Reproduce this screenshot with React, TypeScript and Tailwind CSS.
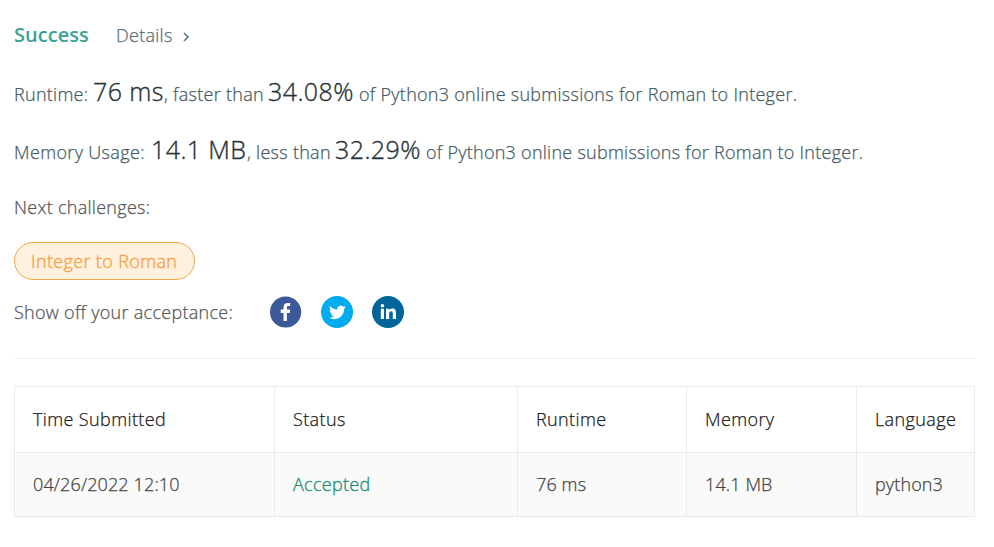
import React from "react";

const columns = [
  { title: "Time Submitted", value: "04/26/2022 12:10" },
  { title: "Status", value: "Accepted" },
  { title: "Runtime", value: "76 ms" },
  { title: "Memory", value: "14.1 MB" },
  { title: "Language", value: "python3" },
];

const grid = "grid grid-cols-[260px_243px_169px_170px_118px]";

const figure = "text-[25px] tracking-[0.42px] text-[#263238] [-webkit-text-stroke:0.35px]";

function Facebook() {
  return (
    <svg className="size-8" viewBox="0 0 32 32">
      <circle cx="15.6" cy="16" r="15.6" fill="#3b5998" />
      <path
        fill="#fff"
        d="M16.9 25v-8.1h2.8l.4-3.3h-3.2v-2c0-.9.3-1.5 1.6-1.5h1.7v-3c-.3 0-1.3-.1-2.5-.1-2.5 0-4.2 1.5-4.2 4.3v2.3h-2.8v3.3h2.8V25z"
      />
    </svg>
  );
}

function Twitter() {
  return (
    <svg className="size-8" viewBox="0 0 32 32">
      <circle cx="16" cy="16" r="16" fill="#00aced" />
      <path
        fill="#fff"
        transform="translate(8 7.9) scale(.7)"
        d="M23.953 4.57a10 10 0 01-2.825.775 4.958 4.958 0 002.163-2.723c-.951.555-2.005.959-3.127 1.184a4.92 4.92 0 00-8.384 4.482C7.69 8.095 4.067 6.13 1.64 3.162a4.822 4.822 0 00-.666 2.475c0 1.71.87 3.213 2.188 4.096a4.904 4.904 0 01-2.228-.616v.06a4.923 4.923 0 003.946 4.827 4.996 4.996 0 01-2.212.085 4.936 4.936 0 004.604 3.417 9.867 9.867 0 01-6.102 2.105c-.39 0-.779-.023-1.17-.067a13.995 13.995 0 007.557 2.209c9.053 0 13.998-7.496 13.998-13.985 0-.21 0-.42-.015-.63A9.935 9.935 0 0024 4.59z"
      />
    </svg>
  );
}

function LinkedIn() {
  return (
    <svg className="size-8" viewBox="0 0 32 32">
      <circle cx="16" cy="16" r="16" fill="#006699" />
      <g fill="#fff">
        <circle cx="10.4" cy="9.7" r="1.8" />
        <path d="M8.8 12.8h3.2V23H8.8zM14 12.8h3v1.4c.5-.9 1.6-1.7 3.2-1.7 3.2 0 3.8 2.1 3.8 4.9V23h-3.2v-5c0-1.2 0-2.7-1.7-2.7s-1.9 1.3-1.9 2.6V23H14z" />
      </g>
    </svg>
  );
}

export default function App() {
  return (
    <main className="h-[547px] w-[994px] overflow-hidden whitespace-nowrap bg-white pl-[14px] pr-[19px] pt-5 font-['Open_Sans','Noto_Sans',sans-serif] text-[18px] font-light tracking-[0.28px] text-[#455a64] [-webkit-text-stroke:0.25px]">
      <header className="flex h-[30px] items-center">
        <h1 className="w-[102px] text-[20px] font-semibold tracking-[0.05px] text-[#3aa394] [-webkit-text-stroke:0px]">
          <span>Success</span>
        </h1>
        <a className="flex items-center gap-[10px] text-[#546e7a]">
          <span>Details</span>
          <svg className="mt-1 h-2.5 w-[7px]" viewBox="0 0 7 10" fill="none" stroke="#607d8b" strokeWidth="1.7">
            <path d="M1 1l4 4-4 4" />
          </svg>
        </a>
      </header>

      <p className="mt-[21px] flex h-10 items-baseline leading-10">
        <span className="w-[79px]">Runtime:</span>
        <span className={`w-[71px] ${figure}`}>76 ms</span>
        <span className="w-[104px]">, faster than</span>
        <span className={`w-[91px] ${figure}`}>34.08%</span>
        <span>of Python3 online submissions for Roman to Integer.</span>
      </p>
      <p className="mt-[18px] flex h-10 items-baseline leading-10">
        <span className="w-[137px] tracking-[0.35px]">Memory Usage:</span>
        <span className={`w-[96px] ${figure}`}>14.1 MB</span>
        <span className="w-[88px]">, less than</span>
        <span className={`w-[91px] ${figure}`}>32.29%</span>
        <span className="tracking-[0.26px]">of Python3 online submissions for Roman to Integer.</span>
      </p>

      <p className="mt-[23px] leading-[30px] text-[#555]">
        <span>Next challenges:</span>
      </p>
      <a className="mt-5 flex h-[38px] w-[181px] items-center rounded-full border border-[#f0a848] bg-[#fff1de] pl-4 tracking-[0.36px] text-[#f5a142] [-webkit-text-stroke:0.35px]">
        <span>Integer to Roman</span>
      </a>

      <div className="mt-4 flex h-8 items-center text-[#555]">
        <span className="w-[256px]">Show off your acceptance:</span>
        <div className="flex gap-[19px]">
          <Facebook />
          <Twitter />
          <LinkedIn />
        </div>
      </div>

      <hr className="mt-[30px] border-[#eee]" />

      <section className="mt-[27px] border-l border-t border-[#ebebeb]">
        <div className={grid}>
          {columns.map((c) => (
            <div key={c.title} className="flex h-[66px] items-center border-b border-r border-[#ebebeb] pl-[18px] tracking-[0.38px] text-[#212121]">
              <span>{c.title}</span>
            </div>
          ))}
        </div>
        <div className={grid}>
          {columns.map((c) => (
            <div
              key={c.title}
              className={`flex h-16 items-center border-b border-r border-[#ebebeb] bg-[#fafafa] pl-[18px] ${c.value === "Accepted" ? "tracking-[0.3px] text-[#1f9079] [-webkit-text-stroke:0.35px]" : "tracking-[0.13px] text-[#424242]"}`}
            >
              <span>{c.value}</span>
            </div>
          ))}
        </div>
      </section>
    </main>
  );
}
